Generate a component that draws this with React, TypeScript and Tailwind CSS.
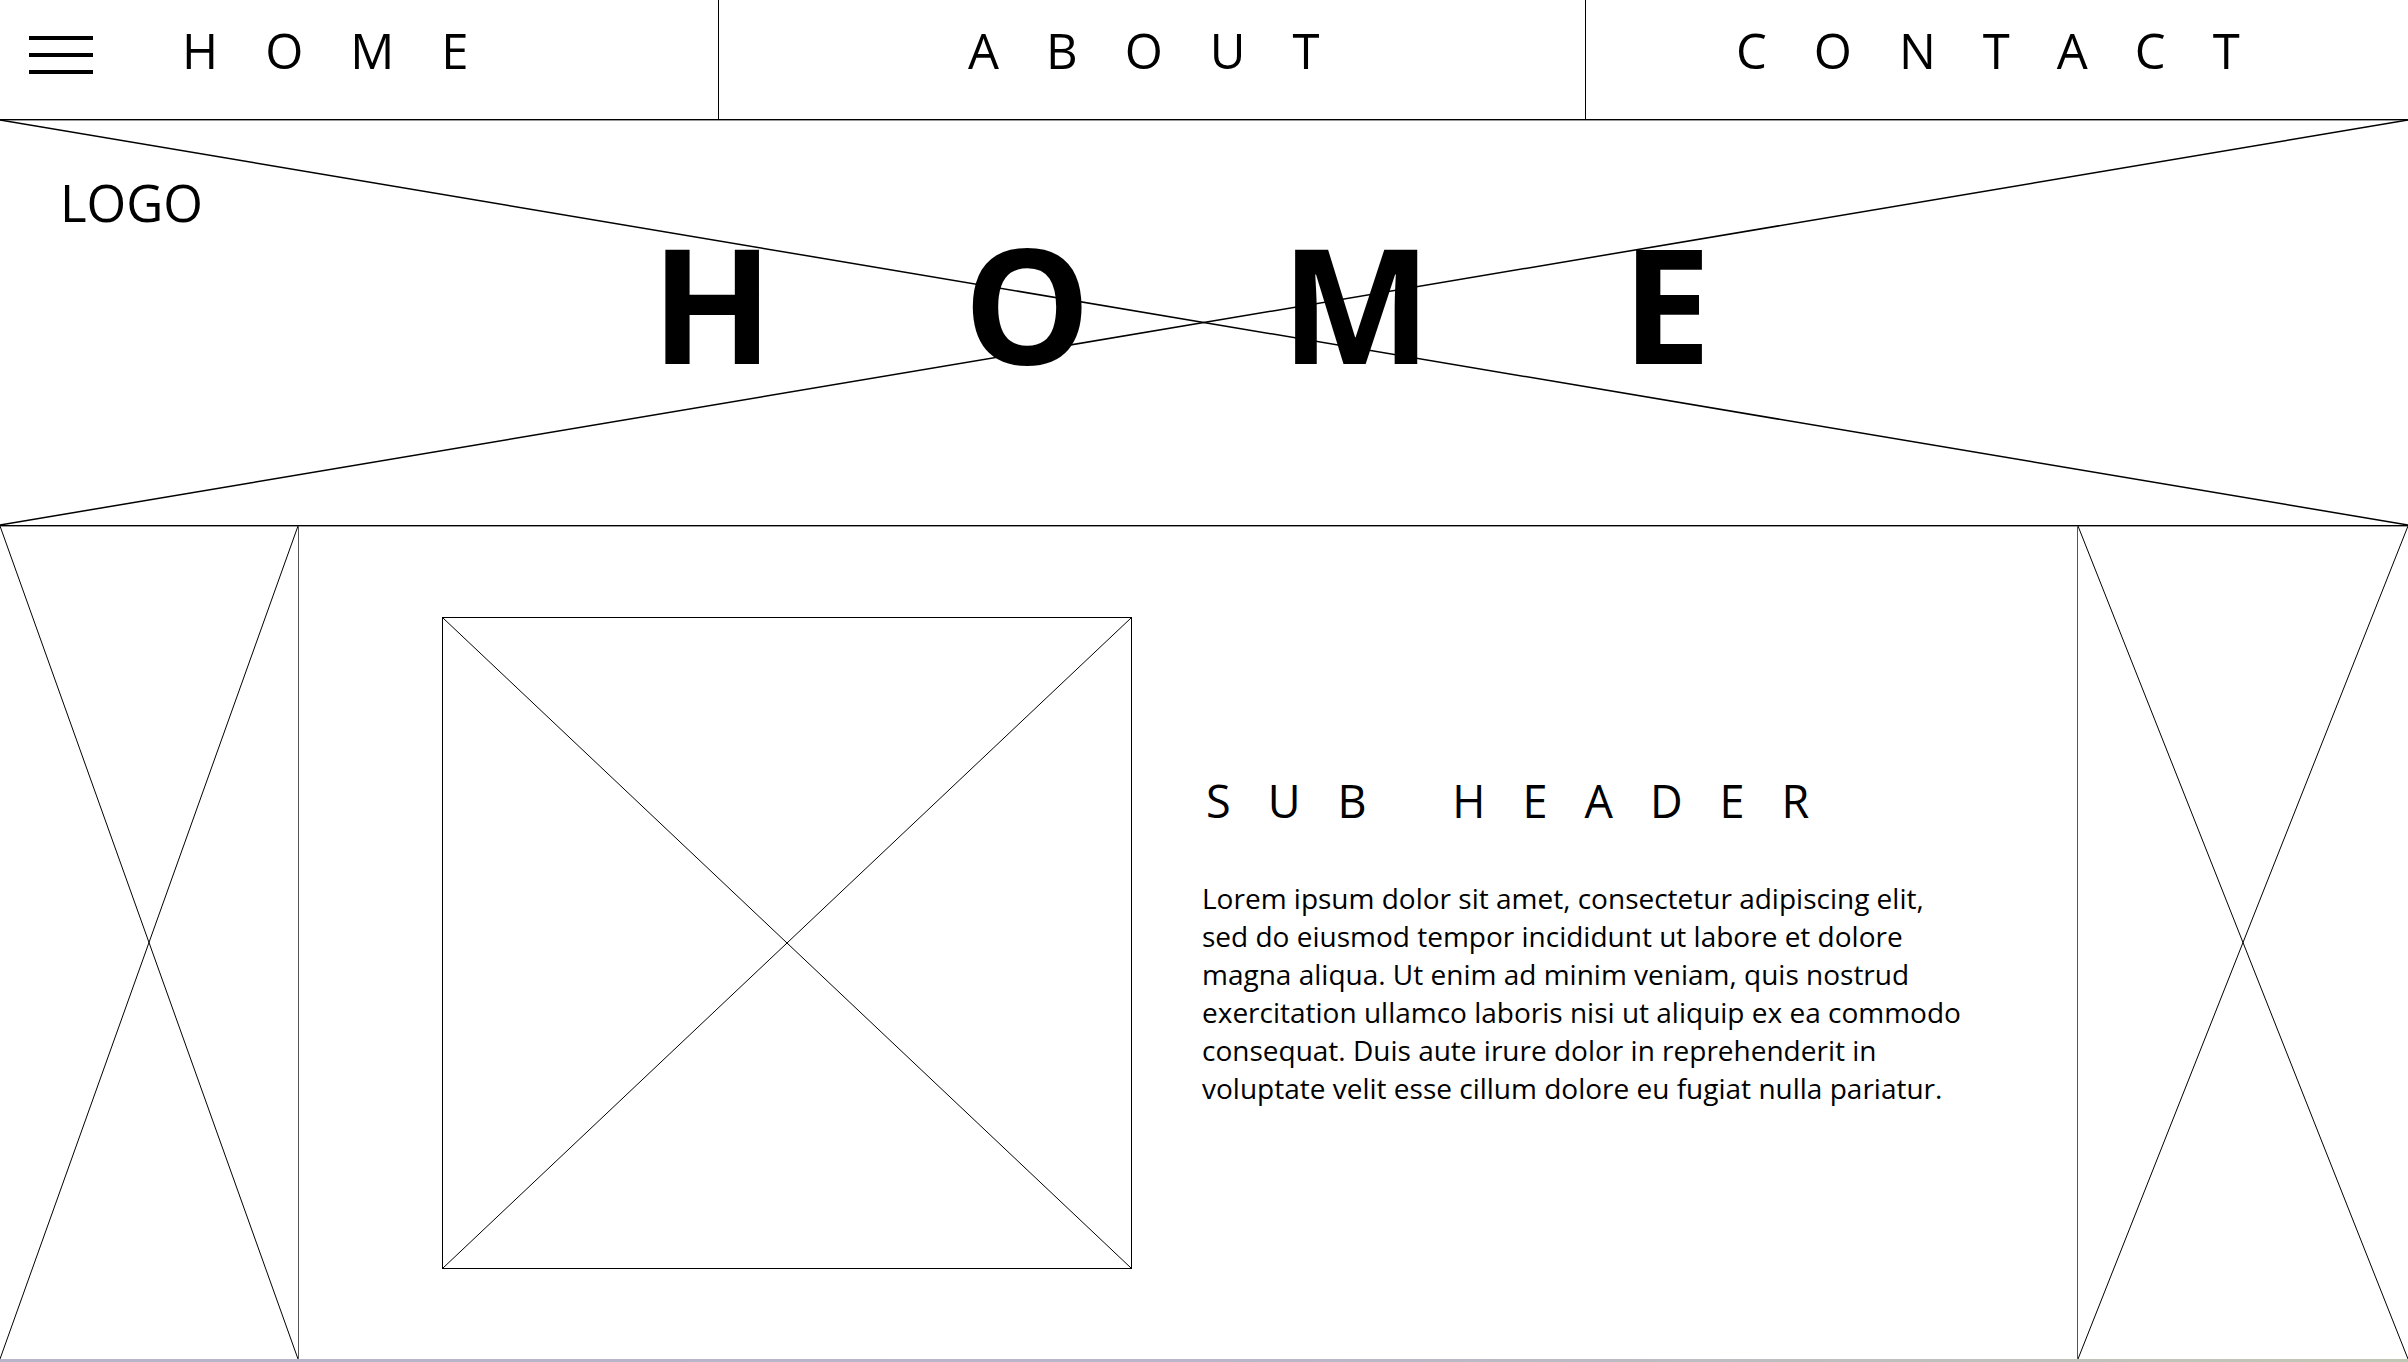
import React from 'react';

const bodyLines = [
  'Lorem ipsum dolor sit amet, consectetur adipiscing elit,',
  'sed do eiusmod tempor incididunt ut labore et dolore',
  'magna aliqua. Ut enim ad minim veniam, quis nostrud',
  'exercitation ullamco laboris nisi ut aliquip ex ea commodo',
  'consequat. Duis aute irure dolor in reprehenderit in',
  'voluptate velit esse cillum dolore eu fugiat nulla pariatur.',
];

// placeholder cross drawn from corner to corner
const Cross: React.FC<{ width?: number }> = ({ width = 1 }) => (
  <svg
    className="absolute inset-0 w-full h-full pointer-events-none"
    viewBox="0 0 100 100"
    preserveAspectRatio="none"
  >
    <line x1="0" y1="0" x2="100" y2="100" stroke="#000" strokeWidth={width} vectorEffect="non-scaling-stroke" />
    <line x1="0" y1="100" x2="100" y2="0" stroke="#000" strokeWidth={width} vectorEffect="non-scaling-stroke" />
  </svg>
);

const App: React.FC = () => {
  return (
    <div className="w-[2408px] h-[1362px] bg-white text-black flex flex-col overflow-hidden font-['Open_Sans',sans-serif]">
      {/* nav */}
      <nav className="flex h-[120px] shrink-0 border-b border-black shadow-[0_1px_0_#9a9a9a] text-[49px] leading-none">
        <div className="w-[719px] border-r border-black flex items-start pt-[26px] pl-[29px]">
          <button className="mt-[10px] flex flex-col gap-[13px]" aria-label="menu">
            <span className="block w-[64px] h-[4px] bg-black" />
            <span className="block w-[64px] h-[4px] bg-black" />
            <span className="block w-[64px] h-[4px] bg-black" />
          </button>
          <span className="ml-[89px] tracking-[47px]">HOME</span>
        </div>
        <div className="w-[867px] border-r border-black flex items-start pt-[26px] pl-[249px]">
          <span className="tracking-[47px]">ABOUT</span>
        </div>
        <div className="flex-1 flex items-start pt-[26px] pl-[150px]">
          <span className="tracking-[47px]">CONTACT</span>
        </div>
      </nav>

      {/* hero */}
      <section className="relative h-[406px] shrink-0 border-b border-black shadow-[0_1px_0_#9a9a9a] flex flex-col">
        <Cross width={1.5} />
        <div className="relative pt-[57px] pl-[60px] text-[51px] leading-none">LOGO</div>
        <h1 className="relative mt-[-6px] pl-[651px] text-[160px] font-bold leading-none tracking-[190px]">HOME</h1>
      </section>

      {/* content */}
      <section className="flex h-[833px] shrink-0">
        <div className="relative w-[299px] border-r border-[#555]">
          <Cross />
        </div>
        <div className="flex-1 flex items-center pl-[143px]">
          <div className="relative w-[690px] h-[652px] border border-black">
            <Cross />
          </div>
          <div className="ml-[70px] flex flex-col">
            <h2 className="ml-[4px] text-[45px] leading-none tracking-[37px]">SUB HEADER</h2>
            <div className="mt-[56px] text-[28px] leading-[38px]">
              {bodyLines.map((line, i) => (
                <p key={i} className="whitespace-nowrap">
                  {line}
                </p>
              ))}
            </div>
          </div>
        </div>
        <div className="relative w-[331px] border-l border-[#555]">
          <Cross />
        </div>
      </section>

      <div className="h-[3px] shrink-0 bg-linear-to-r from-[#b8b4c9] via-[#bab5ca] to-[#c1c7b5]" />
    </div>
  );
};

export default App;
